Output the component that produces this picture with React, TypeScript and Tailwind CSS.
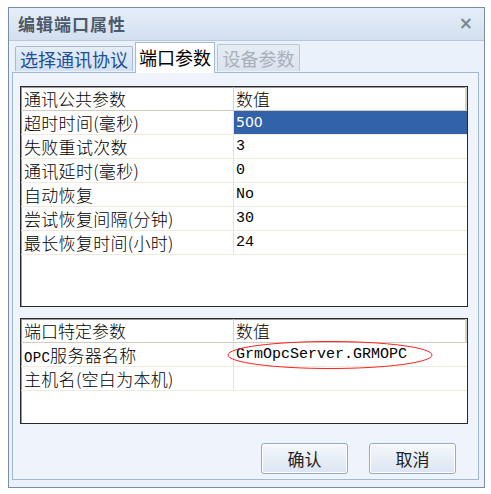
import React from 'react';

const cjk = { fontFamily: '"Noto Sans CJK SC", "Noto Sans", sans-serif' };
const mono = { fontFamily: '"Liberation Mono", "Noto Sans CJK SC", monospace' };

interface Row {
  label: React.ReactNode;
  value: string;
  selected?: boolean;
  valueFont?: 'mono' | 'sans';
}

const commonRows: Row[] = [
  { label: '超时时间(毫秒)', value: '500', selected: true, valueFont: 'sans' },
  { label: '失败重试次数', value: '3' },
  { label: '通讯延时(毫秒)', value: '0' },
  { label: '自动恢复', value: 'No' },
  { label: '尝试恢复间隔(分钟)', value: '30' },
  { label: '最长恢复时间(小时)', value: '24' },
];

const portRows: Row[] = [
  {
    label: (
      <>
        <span style={mono} className="text-[14px]">OPC</span>服务器名称
      </>
    ),
    value: 'GrmOpcServer.GRMOPC',
  },
  { label: '主机名(空白为本机)', value: '' },
];

function ParamTable({ title, rows, height }: { title: string; rows: Row[]; height: string }) {
  return (
    <div className={`border border-[#2a2a2a] bg-white ${height} shadow-[inset_1px_1px_0_#9a9a9a]`}>
      <div className="flex h-[24px] border-b border-[#cfcbbd] text-[17px] font-light text-black" style={cjk}>
        <div className="w-[213px] pl-[3px] leading-[23px] border-r border-[#d6d2c4]">{title}</div>
        <div className="flex-1 pl-[2px] leading-[23px] border-r-2 border-[#d6d2c4]">数值</div>
      </div>
      {rows.map((r, i) => (
        <div key={i} className="flex h-[24px] border-b border-[#eeeadc] text-black">
          <div
            className="w-[213px] pl-[3px] leading-[23px] text-[17px] font-light border-r border-[#e6e2d4] whitespace-nowrap tracking-[0.3px]"
            style={cjk}
          >
            {r.label}
          </div>
          <div
            className={`flex-1 pl-[2px] leading-[23px] text-[15px] whitespace-nowrap ${r.selected ? 'bg-[#3262a9] text-white' : ''}`}
            style={r.valueFont === 'sans' ? { fontFamily: '"DejaVu Sans", sans-serif', fontSize: 14 } : mono}
          >
            {r.value}
          </div>
        </div>
      ))}
    </div>
  );
}

function DialogButton({ children }: { children: React.ReactNode }) {
  return (
    <button
      className="w-[87px] h-[31px] rounded-[3px] border border-[#94aacb] bg-gradient-to-b from-[#f5f8fc] to-[#dbe5f2] text-[17px] text-[#222] shadow-[inset_0_0_0_1px_#ffffff]"
      style={cjk}
    >
      {children}
    </button>
  );
}

export default function App() {
  return (
    <div className="w-[491px] h-[494px] bg-white pt-[7px] pl-[8px]">
      <div className="relative w-[477px] h-[481px] border border-[#7a8ca6] bg-[#c3d4ea] flex flex-col">
        {/* title bar */}
        <div className="h-[33px] flex items-center justify-between px-[9px] bg-gradient-to-b from-[#e6eef8] to-[#d2dfef] border-b border-[#b7c8de]">
          <span className="text-[17px] font-bold text-[#4c5a6c] tracking-[1px]" style={cjk}>
            编辑端口属性
          </span>
          <span className="text-[17px] font-bold text-[#7d8794] mr-[2px]" style={{ fontFamily: '"DejaVu Sans", sans-serif' }}>
            ×
          </span>
        </div>

        <div className="flex-1 flex flex-col pl-[3px] pr-[5px] pb-[7px] bg-[#eaf1fa]">
          {/* tabs */}
          <div className="h-[31px] flex items-end pl-[3px] gap-[2px] relative z-10">
            <div
              className="w-[118px] h-[25px] mb-[1px] border border-[#a7bad3] border-b-0 rounded-t-[2px] bg-gradient-to-b from-[#e4edf8] to-[#d4e1f1] text-[18px] leading-[24px] text-[#1d4f99] text-center"
              style={cjk}
            >
              选择通讯协议
            </div>
            <div
              className="w-[80px] h-[31px] -mb-[1px] border border-[#a7bad3] border-b-0 bg-white text-[18px] leading-[28px] text-black text-center"
              style={cjk}
            >
              端口参数
            </div>
            <div
              className="w-[83px] h-[27px] mb-[1px] border border-[#b8c6d8] border-b-0 rounded-t-[2px] bg-gradient-to-b from-[#e7edf5] to-[#dbe3ee] text-[18px] leading-[26px] text-[#a9b0b8] text-center"
              style={cjk}
            >
              设备参数
            </div>
          </div>

          {/* panel */}
          <div className="flex-1 border border-[#a3b8d3] bg-[#eff4fc] pt-[13px] pl-[7px] pr-[10px] flex flex-col">
            <ParamTable title="通讯公共参数" rows={commonRows} height="h-[221px]" />
            <div className="mt-[11px] relative">
              <ParamTable title="端口特定参数" rows={portRows} height="h-[106px]" />
              <svg className="absolute left-[206px] top-[22px]" width="208" height="30" viewBox="0 0 208 30">
                <ellipse cx="104" cy="15" rx="102" ry="13.5" fill="none" stroke="#ff2020" strokeWidth="1" />
              </svg>
            </div>
            <div className="flex justify-end gap-[21px] mt-[19px] pr-[12px]">
              <DialogButton>确认</DialogButton>
              <DialogButton>取消</DialogButton>
            </div>
          </div>
        </div>
      </div>
    </div>
  );
}
